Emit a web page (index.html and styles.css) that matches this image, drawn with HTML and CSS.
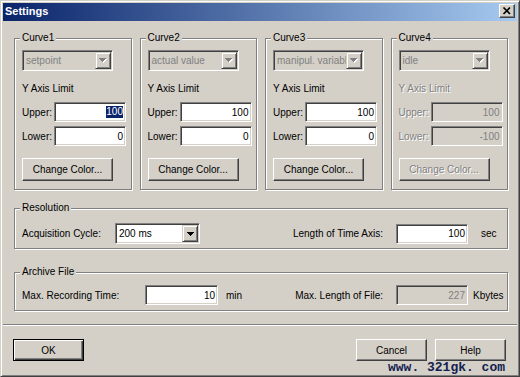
FILE: index.html
```html
<!DOCTYPE html>
<html lang="en">
<head>
    <meta charset="UTF-8">
    <title>Settings</title>
    <link rel="stylesheet" href="styles.css">
</head>
<body>
    <div class="window">
        <div class="title_bar">
            <span class="title_text">Settings</span>
            <span class="close_button">
                <svg width="14" height="12" viewBox="0 0 14 12"><path d="M3.5 2.5 L10 9 M10 2.5 L3.5 9" stroke="black" stroke-width="1.7"/></svg>
            </span>
        </div>

        <div class="content">
            <div class="curves">
                <div class="group">
                    <div class="group_title">Curve1</div>
                    <div class="combo combo_off curve_combo">
                        <span class="combo_text">setpoint</span>
                        <span class="combo_button"><svg width="8" height="5" viewBox="0 0 8 5"><path class="arrow_shadow" d="M1 1h7v1H1zM2 2h5v1H2zM3 3h3v1H3zM4 4h1v1H4z"/><path class="arrow_grey" d="M0 0h7v1H0zM1 1h5v1H1zM2 2h3v1H2zM3 3h1v1H3z"/></svg></span>
                    </div>
                    <div class="y_label">Y Axis Limit</div>
                    <div class="field_row">
                        <span class="field_label">Upper:</span>
                        <span class="edit"><span class="selected">100</span></span>
                    </div>
                    <div class="field_row lower_row">
                        <span class="field_label">Lower:</span>
                        <span class="edit">0</span>
                    </div>
                    <div class="push_button change_button">Change Color...</div>
                </div>

                <div class="group">
                    <div class="group_title">Curve2</div>
                    <div class="combo combo_off curve_combo">
                        <span class="combo_text">actual value</span>
                        <span class="combo_button"><svg width="8" height="5" viewBox="0 0 8 5"><path class="arrow_shadow" d="M1 1h7v1H1zM2 2h5v1H2zM3 3h3v1H3zM4 4h1v1H4z"/><path class="arrow_grey" d="M0 0h7v1H0zM1 1h5v1H1zM2 2h3v1H2zM3 3h1v1H3z"/></svg></span>
                    </div>
                    <div class="y_label">Y Axis Limit</div>
                    <div class="field_row">
                        <span class="field_label">Upper:</span>
                        <span class="edit">100</span>
                    </div>
                    <div class="field_row lower_row">
                        <span class="field_label">Lower:</span>
                        <span class="edit">0</span>
                    </div>
                    <div class="push_button change_button">Change Color...</div>
                </div>

                <div class="group">
                    <div class="group_title">Curve3</div>
                    <div class="combo combo_off curve_combo">
                        <span class="combo_text">manipul. variable</span>
                        <span class="combo_button"><svg width="8" height="5" viewBox="0 0 8 5"><path class="arrow_shadow" d="M1 1h7v1H1zM2 2h5v1H2zM3 3h3v1H3zM4 4h1v1H4z"/><path class="arrow_grey" d="M0 0h7v1H0zM1 1h5v1H1zM2 2h3v1H2zM3 3h1v1H3z"/></svg></span>
                    </div>
                    <div class="y_label">Y Axis Limit</div>
                    <div class="field_row">
                        <span class="field_label">Upper:</span>
                        <span class="edit">100</span>
                    </div>
                    <div class="field_row lower_row">
                        <span class="field_label">Lower:</span>
                        <span class="edit">0</span>
                    </div>
                    <div class="push_button change_button">Change Color...</div>
                </div>

                <div class="group">
                    <div class="group_title">Curve4</div>
                    <div class="combo combo_off curve_combo">
                        <span class="combo_text">idle</span>
                        <span class="combo_button"><svg width="8" height="5" viewBox="0 0 8 5"><path class="arrow_shadow" d="M1 1h7v1H1zM2 2h5v1H2zM3 3h3v1H3zM4 4h1v1H4z"/><path class="arrow_grey" d="M0 0h7v1H0zM1 1h5v1H1zM2 2h3v1H2zM3 3h1v1H3z"/></svg></span>
                    </div>
                    <div class="y_label disabled_text">Y Axis Limit</div>
                    <div class="field_row">
                        <span class="field_label disabled_text">Upper:</span>
                        <span class="edit edit_off">100</span>
                    </div>
                    <div class="field_row lower_row">
                        <span class="field_label disabled_text">Lower:</span>
                        <span class="edit edit_off">-100</span>
                    </div>
                    <div class="push_button change_button disabled_text">Change Color...</div>
                </div>
            </div>

            <div class="group section resolution">
                <div class="group_title">Resolution</div>
                <div class="section_row">
                    <span class="acq_label">Acquisition Cycle:</span>
                    <div class="combo acq_combo">
                        <span class="combo_text">200 ms</span>
                        <span class="combo_button"><svg width="7" height="4" viewBox="0 0 7 4"><path d="M0 0h7v1H0zM1 1h5v1H1zM2 2h3v1H2zM3 3h1v1H3z"/></svg></span>
                    </div>
                    <div class="right_cluster">
                        <span>Length of Time Axis:</span>
                        <span class="edit wide_edit">100</span>
                        <span class="unit unit_sec">sec</span>
                    </div>
                </div>
            </div>

            <div class="group section archive">
                <div class="group_title">Archive File</div>
                <div class="section_row">
                    <span class="rec_label">Max. Recording Time:</span>
                    <span class="edit rec_edit">10</span>
                    <span class="unit unit_min">min</span>
                    <div class="right_cluster">
                        <span>Max. Length of File:</span>
                        <span class="edit edit_off wide_edit">227</span>
                        <span class="unit unit_kb">Kbytes</span>
                    </div>
                </div>
            </div>
        </div>

        <div class="separator"></div>

        <div class="buttons">
            <div class="push_button dialog_button default_button">OK</div>
            <div class="push_button dialog_button cancel_button">Cancel</div>
            <div class="push_button dialog_button help_button">Help</div>
        </div>

        <div class="watermark">www. 321gk. com</div>
    </div>
</body>
</html>
```

FILE: styles.css
```css
/* General */
*{
    box-sizing: border-box;
}
body{
    margin: 0px;
    font-family: "Liberation Sans", Arial, sans-serif;
    font-size: 10px;
    color: black;
    background-color: #d4d0c8;
}
.window{
    position: relative;
    width: 520px;
    height: 377px;
    padding: 2px;
    background-color: #d4d0c8;
    border: 1px solid;
    border-color: #d4d0c8 #404040 #404040 #d4d0c8;
    box-shadow: inset 1px 1px 0 #ffffff, inset -1px -1px 0 #808080;
}

/* Title bar */
.title_bar{
    display: flex;
    justify-content: space-between;
    align-items: flex-start;
    height: 18px;
    padding: 0px 2px;
    background: linear-gradient(to right, #0a246a, #a6caf0);
}
.title_text{
    color: white;
    font-weight: bold;
    font-size: 11px;
    line-height: 17px;
}
.close_button{
    display: flex;
    width: 16px;
    height: 14px;
    margin-top: 1px;
    background-color: #d4d0c8;
    border: 1px solid;
    border-color: #ffffff #404040 #404040 #ffffff;
    box-shadow: inset -1px -1px 0 #808080;
}

/* Groups */
.content{
    padding: 17px 9px 0px 11px;
}
.curves{
    display: grid;
    grid-template-columns: repeat(4, 1fr);
    column-gap: 8px;
}
.group{
    border: 1px solid #808080;
    box-shadow: inset 1px 1px 0 #ffffff, 1px 1px 0 #ffffff;
    padding: 0px 4px 8px 7px;
}
.group_title{
    width: fit-content;
    margin: -7px 0px 0px -2px;
    padding: 0px 2px;
    line-height: 12px;
    background-color: #d4d0c8;
}

/* Combo boxes */
.combo{
    display: flex;
    height: 21px;
    padding: 1px;
    background-color: white;
    border: 1px solid;
    border-color: #808080 #ffffff #ffffff #808080;
    box-shadow: inset 1px 1px 0 #404040, inset -1px -1px 0 #d4d0c8;
}
.combo_off{
    background-color: #d4d0c8;
    color: #808080;
}
.curve_combo{
    width: 91px;
    margin-top: 6px;
}
.combo_text{
    flex: 1;
    min-width: 0;
    overflow: hidden;
    white-space: nowrap;
    padding-left: 2px;
    line-height: 17px;
}
.combo_button{
    display: flex;
    justify-content: center;
    align-items: center;
    width: 16px;
    height: 17px;
    flex-shrink: 0;
    background-color: #d4d0c8;
    border: 1px solid;
    border-color: #d4d0c8 #404040 #404040 #d4d0c8;
    box-shadow: inset 1px 1px 0 #ffffff, inset -1px -1px 0 #808080;
}
.arrow_shadow{
    fill: #ffffff;
}
.arrow_grey{
    fill: #808080;
}

/* Edits */
.y_label{
    margin-top: 12px;
    line-height: 12px;
}
.field_row{
    display: flex;
    align-items: center;
    margin-top: 7px;
}
.lower_row{
    margin-top: 4px;
}
.field_label{
    width: 32px;
}
.edit{
    display: flex;
    justify-content: flex-end;
    align-items: center;
    width: 72px;
    height: 20px;
    padding-right: 2px;
    background-color: white;
    border: 1px solid;
    border-color: #808080 #ffffff #ffffff #808080;
    box-shadow: inset 1px 1px 0 #404040, inset -1px -1px 0 #d4d0c8;
}
.edit_off{
    background-color: #d4d0c8;
    color: #808080;
}
.selected{
    background-color: #0a246a;
    color: white;
    line-height: 12px;
}
.disabled_text{
    color: #808080;
    text-shadow: 1px 1px 0 #ffffff;
}

/* Buttons */
.push_button{
    display: flex;
    justify-content: center;
    align-items: center;
    background-color: #d4d0c8;
    border: 1px solid;
    border-color: #ffffff #404040 #404040 #ffffff;
    box-shadow: inset -1px -1px 0 #808080;
}
.change_button{
    width: 91px;
    height: 23px;
    margin-top: 12px;
}

/* Resolution and archive */
.section{
    padding: 0px 0px 4px 7px;
}
.resolution{
    margin-top: 18px;
}
.archive{
    margin-top: 23px;
    padding-bottom: 5px;
}
.section_row{
    display: flex;
    align-items: center;
    margin-top: 9px;
    height: 21px;
}
.archive .section_row{
    margin-top: 7px;
    height: 20px;
}
.acq_label{
    width: 93px;
}
.acq_combo{
    width: 85px;
}
.right_cluster{
    display: flex;
    align-items: center;
    margin-left: auto;
}
.wide_edit{
    margin-left: 13px;
}
.rec_label{
    width: 123px;
}
.rec_edit{
    width: 73px;
}
.unit_min{
    margin-left: 8px;
}
.unit_sec{
    width: 26px;
    margin-left: 13px;
}
.unit_kb{
    width: 34px;
    margin-left: 5px;
}

/* Bottom */
.separator{
    margin-top: 13px;
    height: 2px;
    border-top: 1px solid #808080;
    border-bottom: 1px solid #ffffff;
}
.buttons{
    display: flex;
    margin-top: 13px;
    padding: 0px 11px 0px 10px;
}
.dialog_button{
    width: 71px;
    height: 22px;
}
.default_button{
    border: 1px solid black;
    box-shadow: inset 1px 1px 0 #ffffff, inset -1px -1px 0 #404040, inset -2px -2px 0 #808080;
}
.cancel_button{
    margin-left: auto;
}
.help_button{
    margin-left: 8px;
}
.watermark{
    position: absolute;
    left: 387px;
    top: 359px;
    font-family: "Liberation Mono", monospace;
    font-weight: bold;
    font-size: 13px;
    line-height: 15px;
    color: #13224f;
}
```
